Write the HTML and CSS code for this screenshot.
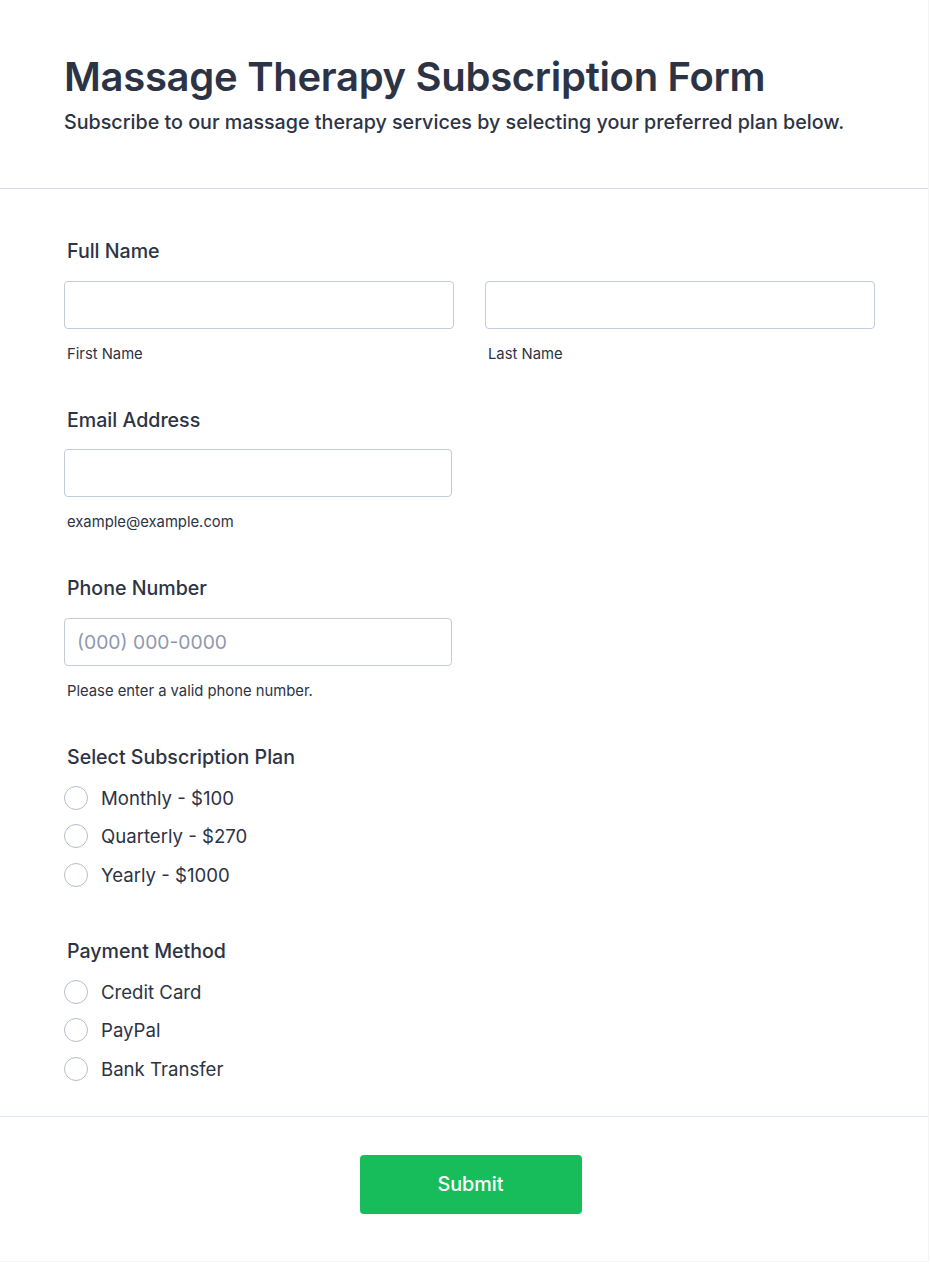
FILE: index.html
```html
<!DOCTYPE html>
<html lang="en">
<head>
<meta charset="utf-8">
<title>Massage Therapy Subscription Form</title>
<link rel="stylesheet" href="styles.css">
</head>
<body>
<div class="card">
  <header class="header">
    <h1 class="title">Massage Therapy Subscription Form</h1>
    <p class="subtitle">Subscribe to our massage therapy services by selecting your preferred plan below.</p>
  </header>
  <form class="form">
    <div class="field">
      <div class="label">Full Name</div>
      <div class="name-row">
        <div class="name-col">
          <input class="input" type="text">
          <div class="sublabel">First Name</div>
        </div>
        <div class="name-col">
          <input class="input" type="text">
          <div class="sublabel">Last Name</div>
        </div>
      </div>
    </div>
    <div class="field">
      <div class="label">Email Address</div>
      <input class="input input-half" type="text">
      <div class="sublabel">example@example.com</div>
    </div>
    <div class="field">
      <div class="label">Phone Number</div>
      <input class="input input-half" type="text" placeholder="(000) 000-0000">
      <div class="sublabel">Please enter a valid phone number.</div>
    </div>
    <div class="field field-radio">
      <div class="label label-radio">Select Subscription Plan</div>
      <div class="options">
        <label class="option"><span class="radio"></span><span class="option-text">Monthly - $100</span></label>
        <label class="option"><span class="radio"></span><span class="option-text">Quarterly - $270</span></label>
        <label class="option"><span class="radio"></span><span class="option-text">Yearly - $1000</span></label>
      </div>
    </div>
    <div class="field field-radio field-last">
      <div class="label label-radio">Payment Method</div>
      <div class="options">
        <label class="option"><span class="radio"></span><span class="option-text">Credit Card</span></label>
        <label class="option"><span class="radio"></span><span class="option-text">PayPal</span></label>
        <label class="option"><span class="radio"></span><span class="option-text">Bank Transfer</span></label>
      </div>
    </div>
  </form>
  <footer class="footer">
    <button class="submit" type="button">Submit</button>
  </footer>
</div>
</body>
</html>
```
FILE: styles.css
```css
* { box-sizing: border-box; }
html, body { margin: 0; padding: 0; background: #ffffff; }
body {
  font-family: Inter, "Noto Sans", "Liberation Sans", sans-serif;
  color: #2c3345;
}
.card {
  width: 929px;
  border-right: 1px solid #f3f4f8;
  border-bottom: 1px solid #f3f4f8;
  background: #ffffff;
}
.header {
  padding: 53px 64px 52px;
  border-bottom: 1px solid #d9d9e8;
}
.title {
  margin: 0;
  font-size: 40px;
  line-height: 48px;
  font-weight: 600;
  letter-spacing: -0.3px;
  color: #2c3345;
}
.subtitle {
  margin: 7px 0 0;
  font-size: 19.7px;
  line-height: 28px;
  font-weight: 500;
  color: #2c3345;
}
.form {
  padding: 50px 50px 35px 64px;
  border-bottom: 1px solid #e1e7f0;
}
.field { margin-bottom: 44px; }
.field-radio { margin-bottom: 52px; }
.field-last { margin-bottom: 0; }
.label {
  font-size: 19.6px;
  line-height: 24px;
  font-weight: 500;
  padding-left: 3px;
  margin-bottom: 17.5px;
}
.label-radio { margin-bottom: 17px; }
.name-row {
  display: flex;
  gap: 31px;
}
.name-col { width: 390px; flex: none; }
.input {
  display: block;
  width: 100%;
  height: 48px;
  border: 1px solid #c3cad8;
  border-radius: 4px;
  padding: 0 12px;
  font-family: inherit;
  font-size: 19.3px;
  color: #2c3345;
  background: #ffffff;
  outline: none;
}
.input-half { width: 388px; }
.input::placeholder { color: #8f99ad; }
.sublabel {
  margin-top: 15px;
  padding-left: 3px;
  font-size: 14.8px;
  line-height: 20px;
  color: #2c3345;
}
.options {
  display: flex;
  flex-direction: column;
  gap: 14.5px;
}
.option {
  display: flex;
  align-items: center;
  gap: 13px;
  height: 24px;
}
.radio {
  width: 24px;
  height: 24px;
  border: 1px solid #b5bccc;
  border-radius: 50%;
  background: #ffffff;
  flex: none;
}
.option-text {
  font-size: 18.6px;
  line-height: 24px;
  color: #2c3345;
}
.footer {
  display: flex;
  justify-content: center;
  padding: 38px 51px 47px 64px;
}
.submit {
  width: 222px;
  height: 59px;
  border: none;
  border-radius: 4px;
  background: #18bd5b;
  color: #ffffff;
  font-family: inherit;
  font-size: 19.8px;
  font-weight: 500;
  cursor: pointer;
}
```
